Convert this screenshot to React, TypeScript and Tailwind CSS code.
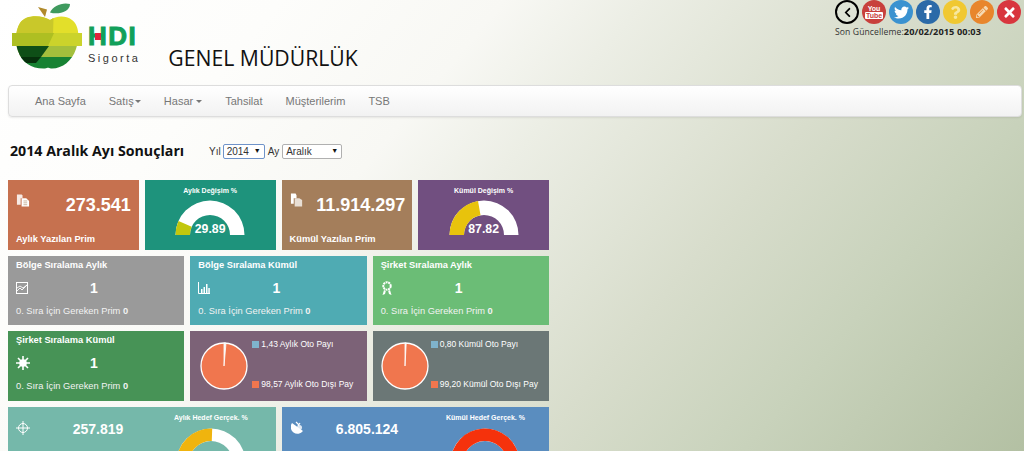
import React from "react";
import { FaTwitter, FaFacebookF, FaQuestion, FaPencilAlt, FaTimes, FaChevronLeft } from "react-icons/fa";

const pt = (cx: number, cy: number, r: number, deg: number) => {
  const a = (deg * Math.PI) / 180;
  return [cx - r * Math.cos(a), cy - r * Math.sin(a)];
};
const sector = (cx: number, cy: number, ro: number, ri: number, from: number, to: number) => {
  const [a, b] = pt(cx, cy, ro, from);
  const [c, d] = pt(cx, cy, ro, to);
  const [e, f] = pt(cx, cy, ri, to);
  const [g, h] = pt(cx, cy, ri, from);
  return `M${a} ${b}A${ro} ${ro} 0 0 1 ${c} ${d}L${e} ${f}A${ri} ${ri} 0 0 0 ${g} ${h}Z`;
};

function Gauge({ split, color }: { split: number; color: string }) {
  return (
    <svg width="70" height="36" viewBox="0 0 70 36" className="block">
      <path d={sector(35, 35, 34.5, 20, 0, 180)} fill="#ffffff" />
      <path d={sector(35, 35, 34.5, 20, 0, split)} fill={color} />
    </svg>
  );
}

function Donut({ split, color }: { split: number; color: string }) {
  return (
    <svg width="70" height="23" viewBox="0 0 70 23" className="block">
      <path d={sector(35, 35, 34.5, 22, 0, 180)} fill="#ffffff" />
      <path d={sector(35, 35, 34.5, 22, 0, split)} fill={color} />
    </svg>
  );
}

function Pie({ sliver }: { sliver: number }) {
  const a = (sliver * Math.PI) / 180;
  const x = 24 + 23 * Math.sin(a);
  const y = 24 - 23 * Math.cos(a);
  return (
    <svg width="48" height="48" viewBox="0 0 48 48" className="block shrink-0">
      <circle cx="24" cy="24" r="23" fill="#f0764e" stroke="#ffffff" strokeWidth="1.3" />
      <path d={`M24 24L24 1L${x} ${y}Z`} fill="#f4f4f0" stroke="#ffffff" strokeWidth="0.8" />
    </svg>
  );
}

function Clip() {
  return (
    <svg width="14" height="15" viewBox="0 0 15 15" className="block shrink-0">
      <path d="M1 1h5l1 1v3H5v7H1z" fill="#ffffff" opacity=".85" />
      <path d="M6 5h5l3 3v6H6z" fill="#ffffff" />
      <path d="M8 8h4M8 10h4M8 12h4" stroke="#b09070" strokeWidth=".7" />
    </svg>
  );
}
function Copy() {
  return (
    <svg width="14" height="15" viewBox="0 0 15 15" className="block shrink-0">
      <path d="M1 0h5l1 2v3H4v6H1z" fill="#ffffff" />
      <path d="M5 5h5l3 2v7H5z" fill="#e8ded4" />
    </svg>
  );
}
function LineIcon() {
  return (
    <svg width="12" height="12" viewBox="0 0 12 12" className="block">
      <rect x=".5" y=".5" width="11" height="11" fill="none" stroke="#ffffff" strokeWidth="1" />
      <path d="M1 9l3-3 2 2 5-5M1 6l3-2 3 2 4-3" fill="none" stroke="#ffffff" strokeWidth=".9" />
    </svg>
  );
}
function BarsIcon() {
  return (
    <svg width="12" height="12" viewBox="0 0 12 12" className="block">
      <path d="M.5 0v11.5H12" fill="none" stroke="#ffffff" />
      <path d="M3 7h1.500v4H3zM5.500 5H7v6H5.500zM8 2h1.500v9H8zM10.300 6h1.500v5h-1.500z" fill="#ffffff" />
    </svg>
  );
}
function Award() {
  return (
    <svg width="12" height="15" viewBox="0 0 12 15" className="block">
      <circle cx="6" cy="5" r="3.700" fill="none" stroke="#ffffff" strokeWidth="2" strokeDasharray="2 .6" />
      <path d="M3 9l-1.500 5 2.500-1 .8-3zM9 9l1.500 5-2.500-1-.8-3z" fill="#ffffff" />
    </svg>
  );
}
function Burst() {
  return (
    <svg width="14" height="14" viewBox="0 0 14 14" className="block">
      <circle cx="7" cy="7" r="3.800" fill="#ffffff" />
      <path d="M7 0v14M0 7h14M2 2l10 10M12 2L2 12" stroke="#ffffff" strokeWidth="1.600" />
    </svg>
  );
}
function Target() {
  return (
    <svg width="14" height="14" viewBox="0 0 14 14" className="block shrink-0 mt-[2px]">
      <circle cx="7" cy="7" r="4.500" fill="none" stroke="#ffffff" strokeWidth="1" />
      <path d="M7 0v14M0 7h14" stroke="#ffffff" strokeWidth="1" />
    </svg>
  );
}
function Dish() {
  return (
    <svg width="14" height="14" viewBox="0 0 14 14" className="block shrink-0 mt-[2px]">
      <path d="M1 2l11 8a6 6 0 0 1-11-8z" fill="#ffffff" />
      <path d="M5 1l3 3M9 2l-2 3" stroke="#ffffff" strokeWidth="1.200" />
      <circle cx="8.500" cy="6.500" r="2.500" fill="#ffffff" opacity=".8" />
    </svg>
  );
}

function Logo() {
  return (
    <div className="flex items-start">
      <svg width="71" height="68" viewBox="0 0 71 68" className="block shrink-0">
        <defs>
          <clipPath id="apple">
            <path d="M38 17C30 12 14 11 8 20C3 28 3 40 6 48C10 60 20 66 33 65.500C36 64.500 36 64.500 39 65.500C50 66 60 58 64 46C68 34 67 22 60 17C53 12 44 13 38 17Z" />
          </clipPath>
        </defs>
        <path d="M26 4L35 6.500L33 14Z" fill="#b08a2c" />
        <path d="M38 9.500C41 3 50 -1 58 1C58 9 46 12 38 9.500Z" fill="#3f9a5e" />
        <g clipPath="url(#apple)">
          <rect x="0" y="0" width="71" height="31" fill="#e3df2a" />
          <path d="M0 0H42L41 31H0Z" fill="#c9c82a" />
          <rect x="0" y="43" width="71" height="11" fill="#a3bf3c" />
          <path d="M0 43H37L29 54H0Z" fill="#0e4f17" />
          <rect x="0" y="54" width="71" height="14" fill="#178233" />
          <path d="M0 54H29L24 60H0Z" fill="#06300c" />
        </g>
        <path d="M0 30H70V43H0Z" fill="#cbd32b" />
        <path d="M0 30H42L36 43H0Z" fill="#aebf22" />
      </svg>
      <div className="flex flex-col items-start mt-[21px] ml-[5px]">
        <div className="relative text-[26px] leading-[24px] font-bold tracking-[1.5px] text-[#12a05a] [-webkit-text-stroke:1px_#12a05a] font-['Liberation_Sans',sans-serif]">
          HDI
          <span className="absolute left-[7px] top-[9px] w-[6px] h-[7px] bg-[#e0243c]" />
        </div>
        <div className="mt-[4px] text-[11px] leading-[13px] tracking-[2.5px] text-[#333333] font-['Liberation_Sans',sans-serif]">Sigorta</div>
      </div>
    </div>
  );
}

function Circle({ bg, children, className = "" }: { bg: string; children: React.ReactNode; className?: string }) {
  return (
    <div className={"w-[24px] h-[24px] rounded-full flex items-center justify-center text-white " + className} style={{ background: bg }}>
      {children}
    </div>
  );
}

function Rank({ title, icon, bg }: { title: string; icon: React.ReactNode; bg: string }) {
  return (
    <div className="w-[176.33px] shrink-0 pl-[8px] pt-[2px] text-white" style={{ background: bg }}>
      <div className="text-[9.3px] leading-[14px] font-bold">{title}</div>
      <div className="flex items-center h-[26px] mt-[3px]">
        <div className="w-[14px]">{icon}</div>
        <div className="w-[128px] text-center text-[14px] font-bold">1</div>
      </div>
      <div className="mt-[3px] text-[9.3px] leading-[14px] text-[#f2f2f2]">
        0. Sıra İçin Gereken Prim <b>0</b>
      </div>
    </div>
  );
}

function PieTile({ bg, sliver, a, b, pl, ml }: { bg: string; sliver: number; a: string; b: string; pl: string; ml: string }) {
  return (
    <div className={"w-[176.33px] shrink-0 flex items-center text-white " + pl} style={{ background: bg }}>
      <Pie sliver={sliver} />
      <div className={"h-full flex flex-col justify-between pt-[7px] pb-[11px] text-[8.5px] leading-[12px] whitespace-nowrap " + ml}>
        <div className="flex items-center gap-[2px]"><span className="w-[7px] h-[7px] bg-[#7fb3cc]" />{a}</div>
        <div className="flex items-center gap-[2px]"><span className="w-[7px] h-[7px] bg-[#f0764e]" />{b}</div>
      </div>
    </div>
  );
}

function Select({ value, w, focus }: { value: string; w: string; focus?: boolean }) {
  return (
    <div className={"h-[15px] flex items-center justify-between pl-[3px] pr-[3px] bg-white rounded-[2px] border text-[10px] text-[#333333] " + w + " " + (focus ? "border-[#6f93c9]" : "border-[#b0b0b0]")}>
      <span>{value}</span>
      <span className="text-[7px] text-[#111111]">▼</span>
    </div>
  );
}

export default function App() {
  return (
    <div className="w-[1024px] h-[451px] overflow-hidden font-['Liberation_Sans',sans-serif] bg-[linear-gradient(130deg,#ffffff_0%,#fdfdfb_20%,#f8f8f4_36%,#eceee5_46%,#d8ddcc_65%,#c8d2bb_80%,#b3c0a3_100%)]">
      <header className="h-[85px] flex items-start justify-between">
        <div className="flex items-start pl-[12px] pt-[3px]">
          <Logo />
          <h1 className="ml-[28px] mt-[40px] text-[21.2px] leading-[30px] text-[#111111] font-['Open_Sans',sans-serif] whitespace-nowrap">GENEL MÜDÜRLÜK</h1>
        </div>
        <div className="w-[189px]">
          <div className="flex gap-[3px]">
            <Circle bg="#dfe4d6" className="border-2 border-black"><FaChevronLeft size={11} color="#000000" /></Circle>
            <Circle bg="#c8403c">
              <span className="flex flex-col items-center leading-none"><span className="text-[7px] font-bold">You</span><span className="text-[7px] font-bold bg-white text-[#c8403c] rounded-[1px] px-[1px]">Tube</span></span>
            </Circle>
            <Circle bg="#3a92d0"><FaTwitter size={15} /></Circle>
            <Circle bg="#2b6aa8"><FaFacebookF size={14} /></Circle>
            <Circle bg="#f0c832"><FaQuestion size={13} color="#f7e8a0" /></Circle>
            <Circle bg="#e8862c"><FaPencilAlt size={12} color="#f6d9b2" /></Circle>
            <Circle bg="#d8363e"><FaTimes size={15} /></Circle>
          </div>
          <div className="mt-[2px] text-[8.6px] leading-[12px] tracking-[0.1px] text-[#333333] font-['Open_Sans',sans-serif] whitespace-nowrap">
            Son Güncelleme:<b className="text-[9.2px] text-[#222222]">20/02/2015 00:03</b>
          </div>
        </div>
      </header>

      <nav className="ml-[8px] mr-[2px] h-[32px] flex items-center pl-[26px] gap-[23px] text-[11px] text-[#777777] rounded-[4px] border border-[#dddddd] shadow-[0_1px_2px_rgba(0,0,0,0.08)] bg-gradient-to-b from-white to-[#f2f2f2]">
        <span>Ana Sayfa</span>
        <span className="flex items-center gap-[1px]">Satış<i className="border-x-[3px] border-x-transparent border-t-[3px] border-t-[#777777]" /></span>
        <span className="flex items-center gap-[3px]">Hasar<i className="border-x-[3px] border-x-transparent border-t-[3px] border-t-[#777777]" /></span>
        <span>Tahsilat</span>
        <span>Müşterilerim</span>
        <span>TSB</span>
      </nav>

      <div className="mt-[24px] ml-[10px] h-[20px] flex items-center">
        <h2 className="text-[14.2px] font-bold text-[#111111] font-['Open_Sans',sans-serif] whitespace-nowrap w-[199px]">2014 Aralık Ayı Sonuçları</h2>
        <span className="text-[10px] text-[#333333] mr-[2px]">Yıl</span>
        <Select value="2014" w="w-[42px]" focus />
        <span className="text-[10px] text-[#333333] mx-[3px]">Ay</span>
        <Select value="Aralık" w="w-[60px]" />
      </div>

      <main className="mt-[19px] ml-[8px] w-[541px] flex flex-col gap-[6px]">
        <div className="flex gap-[6px] h-[70px]">
          <div className="w-[130.75px] shrink-0 bg-[#c6714f] text-white relative pl-[8px] pt-[13px]">
            <div className="flex items-start"><Clip /><div className="flex-1 text-right pr-[8px] mt-[2px] text-[18px] leading-[20px] font-bold">273.541</div></div>
            <div className="absolute left-[8px] bottom-[4px] text-[9.3px] leading-[14px] font-bold">Aylık Yazılan Prim</div>
          </div>
          <div className="w-[130.75px] shrink-0 bg-[#1e937c] text-white flex flex-col items-center pt-[6px] relative">
            <div className="text-[7px] leading-[10px] font-bold">Aylık Değişim %</div>
            <div className="mt-[4px]"><Gauge split={24} color="#c2c70e" /></div>
            <div className="absolute top-[41px] text-[12.3px] leading-[16px] font-bold">29.89</div>
          </div>
          <div className="w-[130.75px] shrink-0 bg-[#a47e5b] text-white relative pl-[8px] pt-[13px]">
            <div className="flex items-start"><Copy /><div className="flex-1 text-right pr-[7px] mt-[2px] text-[18px] leading-[20px] font-bold whitespace-nowrap">11.914.297</div></div>
            <div className="absolute left-[8px] bottom-[4px] text-[9.3px] leading-[14px] font-bold">Kümül Yazılan Prim</div>
          </div>
          <div className="w-[130.75px] shrink-0 bg-[#714f80] text-white flex flex-col items-center pt-[6px] relative">
            <div className="text-[7px] leading-[10px] font-bold">Kümül Değişim %</div>
            <div className="mt-[4px]"><Gauge split={80} color="#e8c30c" /></div>
            <div className="absolute top-[41px] text-[12.3px] leading-[16px] font-bold">87.82</div>
          </div>
        </div>

        <div className="flex gap-[6px] h-[69px]">
          <Rank title="Bölge Sıralama Aylık" icon={<LineIcon />} bg="#9a9a9a" />
          <Rank title="Bölge Sıralama Kümül" icon={<BarsIcon />} bg="#4fabb3" />
          <Rank title="Şirket Sıralama Aylık" icon={<Award />} bg="#6bbd76" />
        </div>

        <div className="flex gap-[6px] h-[70px]">
          <Rank title="Şirket Sıralama Kümül" icon={<Burst />} bg="#479356" />
          <PieTile bg="#7c6277" sliver={5} a="1,43 Aylık Oto Payı" b="98,57 Aylık Oto Dışı Pay" pl="pl-[10px]" ml="ml-[4px]" />
          <PieTile bg="#6b7776" sliver={3} a="0,80 Kümül Oto Payı" b="99,20 Kümül Oto Dışı Pay" pl="pl-[8px]" ml="ml-[2px]" />
        </div>

        <div className="flex gap-[6px] h-[44px]">
          <div className="w-[268px] bg-[#75b8aa] text-white flex items-start pl-[8px] pt-[12px]">
            <Target />
            <div className="w-[136px] mt-[1px] text-center text-[14px] leading-[18px] font-bold">257.819</div>
            <div className="flex flex-col items-center ml-[8px] -mt-[6px]">
              <div className="text-[7px] leading-[10px] font-bold whitespace-nowrap">Aylık Hedef Gerçek. %</div>
              <div className="mt-[5px]"><Donut split={92} color="#f0b40e" /></div>
            </div>
          </div>
          <div className="flex-1 min-w-0 bg-[#5a8dbf] text-white flex items-start pl-[9px] pt-[12px]">
            <Dish />
            <div className="w-[124px] mt-[1px] text-center text-[14px] leading-[18px] font-bold">6.805.124</div>
            <div className="flex flex-col items-center ml-[17px] -mt-[6px]">
              <div className="text-[7px] leading-[10px] font-bold whitespace-nowrap">Kümül Hedef Gerçek. %</div>
              <div className="mt-[5px]"><Donut split={175} color="#f5320c" /></div>
            </div>
          </div>
        </div>
      </main>
    </div>
  );
}
